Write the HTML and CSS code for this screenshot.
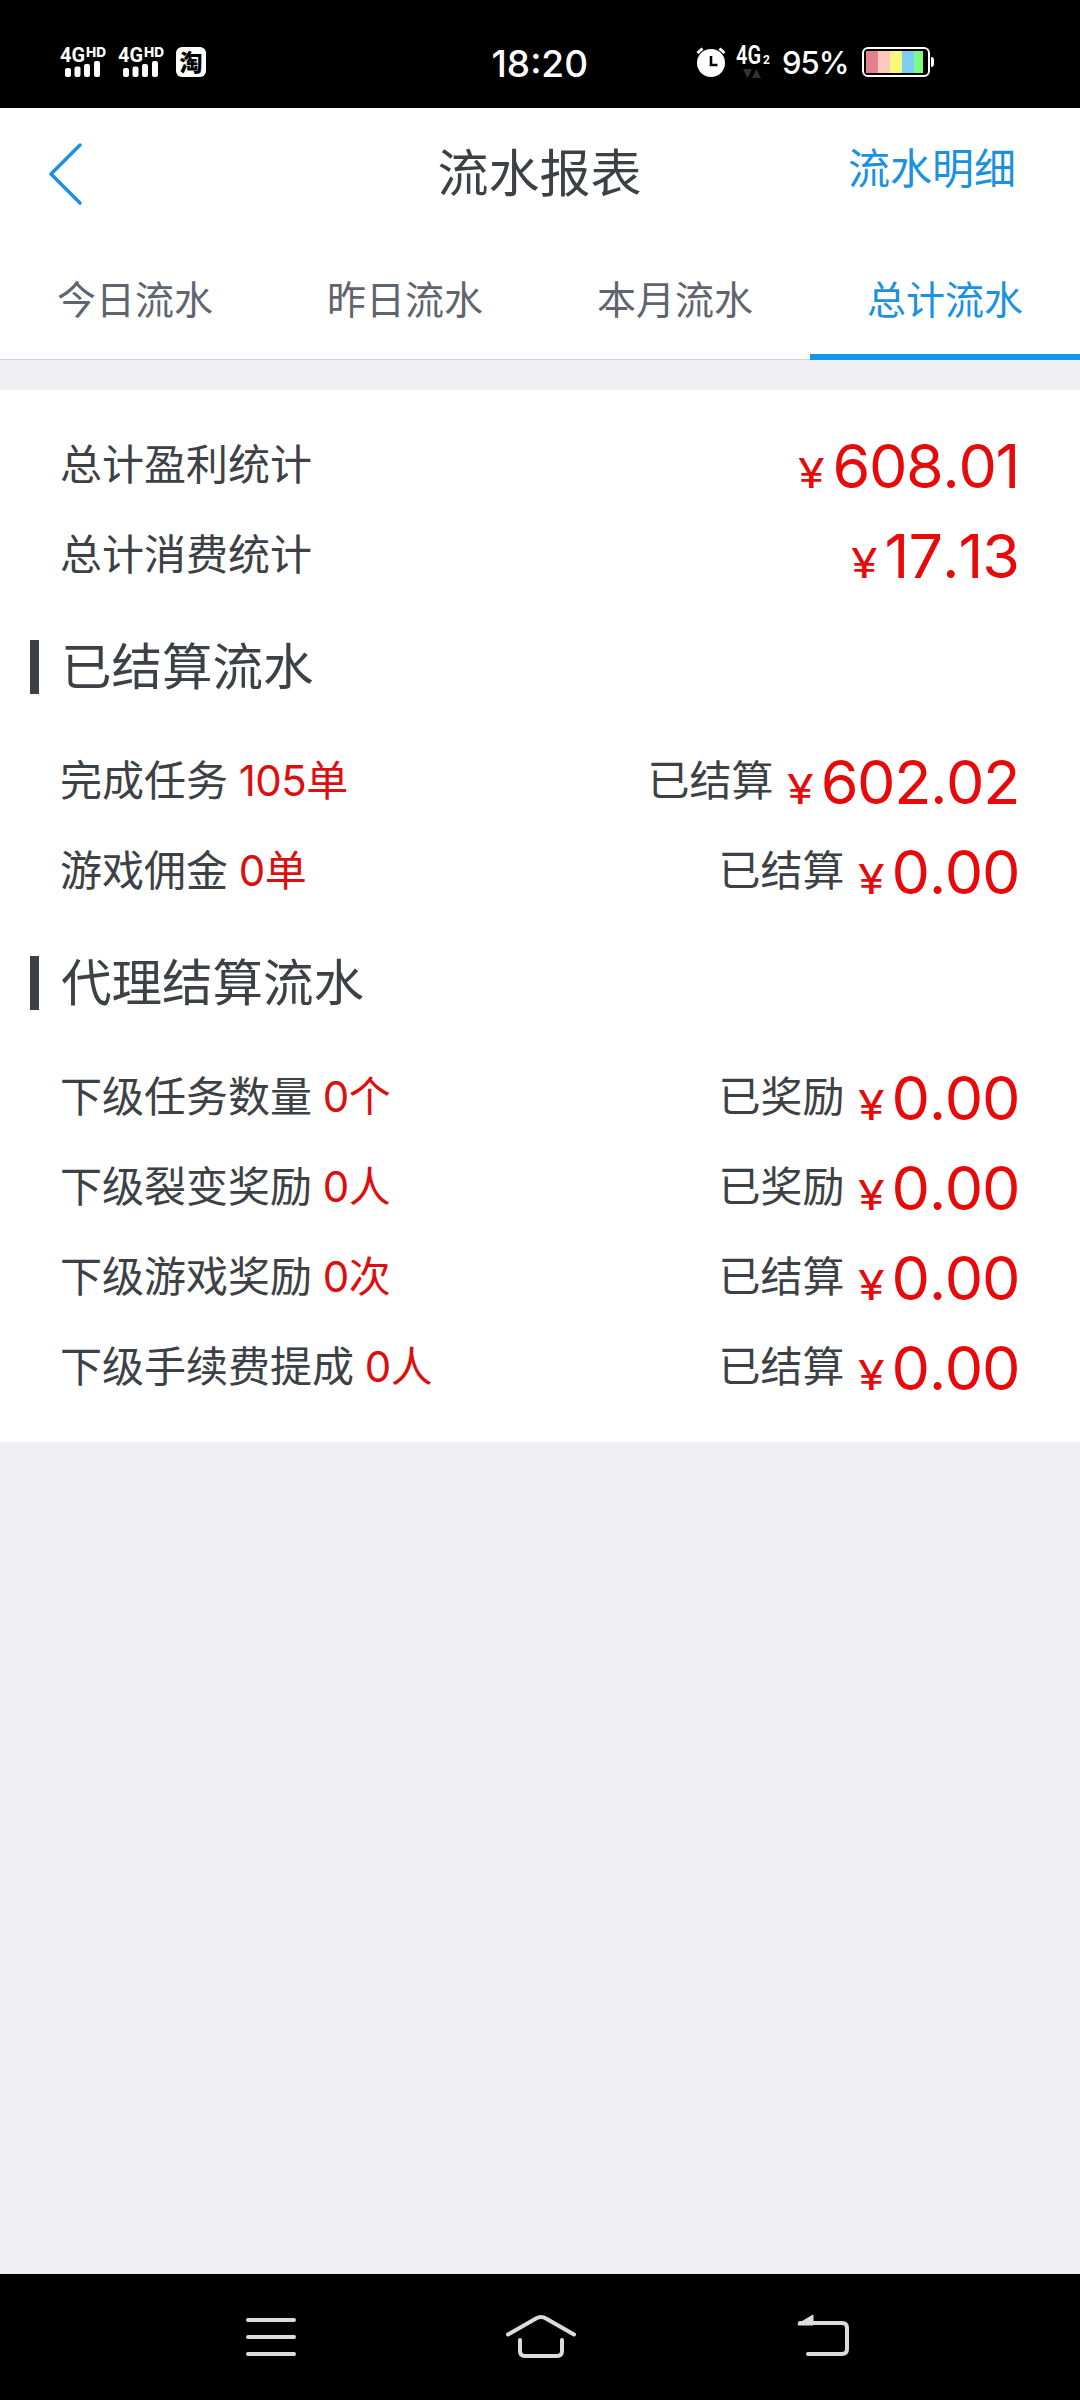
FILE: index.html
```html
<!DOCTYPE html>
<html lang="zh-CN">
<head>
<meta charset="utf-8">
<title>流水报表</title>
<link rel="stylesheet" href="styles.css">
</head>
<body>
<div class="status">
  <div class="status-left">
    <svg class="signal" width="46" height="34" viewBox="0 -4 46 34">
      <text class="sig-4g" x="0" y="15" textLength="25" lengthAdjust="spacingAndGlyphs">4G</text>
      <text class="sig-hd" x="26" y="10" textLength="20" lengthAdjust="spacingAndGlyphs">HD</text>
      <rect x="5" y="21" width="6" height="9" rx="2"/><rect x="14.500" y="19.500" width="6" height="10.500" rx="2"/><rect x="24" y="17" width="6" height="13" rx="2"/><rect x="34" y="14" width="6" height="16" rx="2"/>
    </svg>
    <svg class="signal" width="46" height="34" viewBox="0 -4 46 34">
      <text class="sig-4g" x="0" y="15" textLength="25" lengthAdjust="spacingAndGlyphs">4G</text>
      <text class="sig-hd" x="26" y="10" textLength="20" lengthAdjust="spacingAndGlyphs">HD</text>
      <rect x="5" y="21" width="6" height="9" rx="2"/><rect x="14.500" y="19.500" width="6" height="10.500" rx="2"/><rect x="24" y="17" width="6" height="13" rx="2"/><rect x="34" y="14" width="6" height="16" rx="2"/>
    </svg>
    <span class="tao">淘</span>
  </div>
  <div class="clock">18:20</div>
  <div class="status-right">
    <svg width="30" height="30" viewBox="0 0 30 30">
      <circle cx="15" cy="16" r="14" fill="#fff"/>
      <path d="M1.500 6 6.500 1.500M28.500 6 23.500 1.500" stroke="#fff" stroke-width="3"/>
      <path d="M15 9v9h6.500" fill="none" stroke="#000" stroke-width="2.600"/>
    </svg>
    <svg class="net" width="35" height="42" viewBox="0 -4 35 42">
      <text class="net-4g" x="0" y="19" textLength="25" lengthAdjust="spacingAndGlyphs">4G</text>
      <text class="net-2" x="27" y="19">2</text>
      <path d="M7 24h9l-4.500 9zM16 33h9l-4.500-9z" fill="#333"/>
    </svg>
    <span class="percent">95%</span>
    <svg class="battery" width="72" height="30" viewBox="0 0 72 30">
      <rect x="1" y="1" width="66" height="28" rx="5" fill="none" stroke="#fff" stroke-width="2"/>
      <path d="M69 10q3 0 3 3v4q0 3-3 3z" fill="#fff"/>
      <path d="M4 4h12v22H4z" fill="#e0818d"/><path d="M16 4h12v22H16z" fill="#fcc9bd"/><path d="M28 4h12v22H28z" fill="#f8f97b"/><path d="M40 4h12v22H40z" fill="#7ccdf4"/><path d="M52 4h9v22h-9z" fill="#7dfa82"/>
    </svg>
  </div>
</div>
<header class="bar">
  <svg class="back" width="34" height="62" viewBox="0 0 34 62"><path d="M32 2 3 31l29 29" fill="none" stroke="#1b91e0" stroke-width="3.500" stroke-linecap="round" stroke-linejoin="round"/></svg>
  <h1 class="title">流水报表</h1>
  <a class="detail">流水明细</a>
</header>
<nav class="tabs">
  <a class="tab">今日流水</a><a class="tab">昨日流水</a><a class="tab">本月流水</a><a class="tab active">总计流水</a>
</nav>
<main class="panel">
  <div class="row"><span>总计盈利统计</span><span class="money"><i class="yen">¥</i><b class="amount">608.01</b></span></div>
  <div class="row"><span>总计消费统计</span><span class="money"><i class="yen">¥</i><b class="amount loose">17.13</b></span></div>
  <h2 class="section">已结算流水</h2>
  <div class="row"><span>完成任务 <em class="count">105单</em></span><span class="money"><span class="state">已结算</span><i class="yen">¥</i><b class="amount">602.02</b></span></div>
  <div class="row"><span>游戏佣金 <em class="count">0单</em></span><span class="money"><span class="state">已结算</span><i class="yen">¥</i><b class="amount">0.00</b></span></div>
  <h2 class="section">代理结算流水</h2>
  <div class="row"><span>下级任务数量 <em class="count">0个</em></span><span class="money"><span class="state">已奖励</span><i class="yen">¥</i><b class="amount">0.00</b></span></div>
  <div class="row"><span>下级裂变奖励 <em class="count">0人</em></span><span class="money"><span class="state">已奖励</span><i class="yen">¥</i><b class="amount">0.00</b></span></div>
  <div class="row"><span>下级游戏奖励 <em class="count">0次</em></span><span class="money"><span class="state">已结算</span><i class="yen">¥</i><b class="amount">0.00</b></span></div>
  <div class="row"><span>下级手续费提成 <em class="count">0人</em></span><span class="money"><span class="state">已结算</span><i class="yen">¥</i><b class="amount">0.00</b></span></div>
</main>
<footer class="keys">
  <svg width="70" height="44" viewBox="0 0 70 44"><path d="M12 6h46M12 23h46M12 40h46"/></svg>
  <svg width="70" height="44" viewBox="0 0 70 44"><path d="M2 20.500 30 4.500Q35 1.500 40 4.500L68 20.500M14 26v11q0 5 5 5h32q5 0 5-5V26"/></svg>
  <svg class="key-back" width="70" height="44" viewBox="0 0 70 44"><path d="M11 9H53q5 0 5 5v21q0 5-5 5H19"/><path class="solid" d="M9 10 24 1v10H10z"/></svg>
</footer>
</body>
</html>
```
FILE: styles.css
```css
* { box-sizing: border-box; margin: 0; padding: 0; }
body {
  width: 1080px;
  height: 2400px;
  display: flex;
  flex-direction: column;
  background: #efeff4;
  color: #3d4145;
  font-family: Inter, "Noto Sans CJK SC", sans-serif;
  overflow: hidden;
}
svg { display: block; flex: none; }
h1, h2, b, i, em { font-weight: 400; font-style: normal; }

.status {
  height: 108px;
  flex: none;
  display: grid;
  grid-template-columns: 1fr auto 1fr;
  align-items: center;
  padding: 16px 146px 0 60px;
  background: #000;
  color: #fff;
}
.status-left { display: flex; align-items: flex-end; gap: 12px; padding-bottom: 4px; }
.signal { fill: #fff; }
.sig-4g { font: 700 20px Roboto, sans-serif; }
.sig-hd { font: 800 13px Inter, sans-serif; }
.tao {
  width: 30px;
  height: 30px;
  border-radius: 6px;
  background: #fff;
  color: #000;
  font: 900 23px/29px "Noto Sans CJK SC", sans-serif;
  text-align: center;
}
.clock { width: 97px; margin-left: 86px; padding-top: 4px; font-size: 37px; font-weight: 500; line-height: 40px; white-space: nowrap; }
.status-right { display: flex; align-items: center; justify-content: flex-end; }
.net { margin-left: 10px; fill: #fff; }
.net-4g { font: 600 25px Roboto, sans-serif; }
.net-2 { font: 700 12px Roboto, sans-serif; }
.percent { width: 67px; margin-left: 11px; padding-top: 2px; font: 500 31px/34px Inter, sans-serif; letter-spacing: -1px; white-space: nowrap; }
.battery { margin-left: 13px; }

.bar {
  height: 132px;
  flex: none;
  display: grid;
  grid-template-columns: 1fr auto 1fr;
  align-items: center;
  padding: 0 49px 0 48px;
  background: #fff;
}
.title { font-size: 51px; line-height: 60px; }
.detail { justify-self: end; font-size: 42px; line-height: 50px; padding: 0 15px 10px 0; color: #1b91e0; }

.tabs {
  height: 120px;
  flex: none;
  display: grid;
  grid-template-columns: repeat(4, 1fr);
  background: #fff;
  border-bottom: 1px solid #d2d2d6;
}
.tab { height: 120px; font-size: 39px; line-height: 119px; text-align: center; color: #5f646e; }
.tab.active { color: #1b91e0; border-bottom: 6px solid #1296e8; }

.panel { height: 1052px; flex: none; margin-top: 30px; padding: 30px 61px 0 60px; background: #fff; }
.row { height: 90px; display: flex; justify-content: space-between; align-items: center; font-size: 42px; line-height: 60px; }
.count { color: #dc0f0f; margin-left: -1px; letter-spacing: -.6px; }
.money { display: flex; align-items: baseline; color: #e60a0a; }
.state { align-self: center; color: #3d4145; margin-right: 13px; }
.yen { width: 28px; font-size: 41px; line-height: 60px; margin-right: 6px; transform: scaleX(1.18); transform-origin: left; }
.amount { padding-top: 2px; font-size: 61px; line-height: 72px; letter-spacing: -1.400px; font-kerning: none; }
.amount.loose { letter-spacing: -1px; }
.section {
  height: 136px;
  display: flex;
  align-items: center;
  gap: 22px;
  margin-left: -30px;
  font-size: 50.500px;
  line-height: 58px;
  padding-bottom: 2px;
}
.section::before { content: ""; width: 9px; height: 54px; background: #3d4145; }

.keys {
  height: 126px;
  flex: none;
  margin-top: auto;
  display: flex;
  gap: 200px;
  padding: 40px 0 0 236px;
  background: #000;
}
.keys path { fill: none; stroke: #dcdcdc; stroke-width: 4; stroke-linecap: round; stroke-linejoin: round; }
.keys .solid { fill: #dcdcdc; stroke-width: 1; }
.key-back { margin-left: 13px; }
```
